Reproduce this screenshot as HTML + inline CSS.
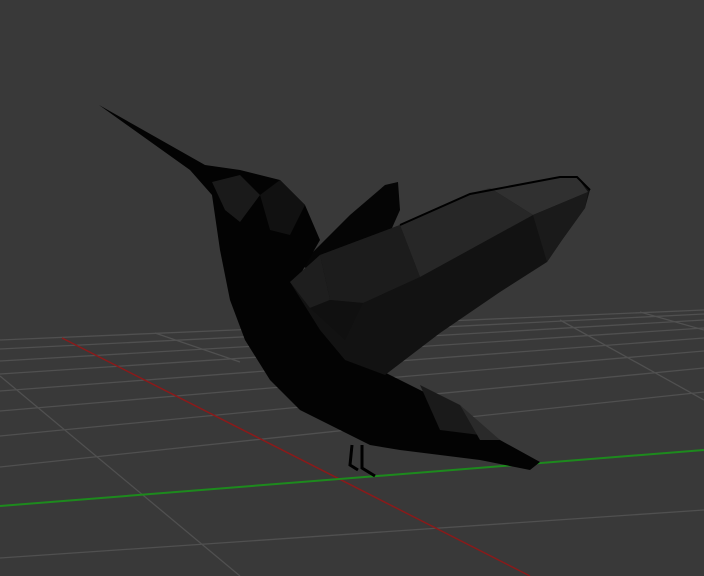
<!DOCTYPE html><html><head><style>body{margin:0;background:#393939}svg{display:block}</style></head><body>
<svg width="704" height="576" viewBox="0 0 704 576" xmlns="http://www.w3.org/2000/svg">
<rect width="704" height="576" fill="#393939"/>
<g stroke="#505050" stroke-width="1.3" fill="none">
<line x1="0" y1="340" x2="704" y2="310"/>
<line x1="0" y1="349" x2="704" y2="314"/>
<line x1="0" y1="361" x2="704" y2="320"/>
<line x1="0" y1="374" x2="704" y2="328"/>
<line x1="0" y1="391" x2="704" y2="338"/>
<line x1="0" y1="411" x2="704" y2="351"/>
<line x1="0" y1="436" x2="704" y2="368"/>
<line x1="0" y1="467" x2="704" y2="392"/>
<line x1="0" y1="558" x2="704" y2="510"/>
<line x1="0" y1="376" x2="240" y2="576"/>
<line x1="155" y1="333" x2="240" y2="362"/>
<line x1="560" y1="320" x2="704" y2="400"/>
<line x1="640" y1="312" x2="704" y2="330"/>
</g>
<line x1="62" y1="338" x2="530" y2="576" stroke="#8a1a1a" stroke-width="1.5"/>
<line x1="0" y1="506" x2="704" y2="450" stroke="#1d8a1d" stroke-width="2"/>
<polygon points="300,265 350,215 385,185 398,182 400,210 380,255 350,290" fill="#050505"/>
<polygon points="99,105 205,165 240,170 280,180 305,205 320,240 300,275 330,330 380,370 440,400 500,440 540,462 530,470 480,460 400,450 370,445 340,430 300,410 270,380 245,340 230,300 220,250 212,195 190,170" fill="#030303"/>
<polygon points="212,182 240,175 260,195 240,222 225,210" fill="#1a1a1a"/>
<polygon points="260,195 280,180 305,205 290,235 270,230" fill="#111"/>
<polygon points="420,385 460,405 480,435 440,430" fill="#1a1a1a"/>
<polygon points="460,405 500,440 480,440" fill="#2a2a2a"/>
<polygon points="290,282 320,255 400,225 470,194 560,177 577,177 590,190 585,208 562,240 547,262 500,292 440,333 385,375 345,360 320,330" fill="#121212"/>
<polygon points="320,255 400,225 420,277 363,303 330,300" fill="#1c1c1c"/>
<polygon points="400,225 470,194 490,188 533,215 420,277" fill="#272727"/>
<polygon points="470,194 560,177 577,177 588,192 533,215 490,188" fill="#303030"/>
<polygon points="533,215 588,192 585,208 562,240 547,262" fill="#1a1a1a"/>
<polygon points="290,282 320,255 330,300 310,308" fill="#1e1e1e"/>
<polygon points="310,308 330,300 363,303 345,340" fill="#101010"/>
<path d="M400,225 L470,194 L560,177 L577,177 L590,190" stroke="#000" stroke-width="2" fill="none"/>
<path d="M352,445 L350,465 L358,470 M362,445 L362,468 L375,476" stroke="#000" stroke-width="3" fill="none"/>
</svg>
</body></html>
